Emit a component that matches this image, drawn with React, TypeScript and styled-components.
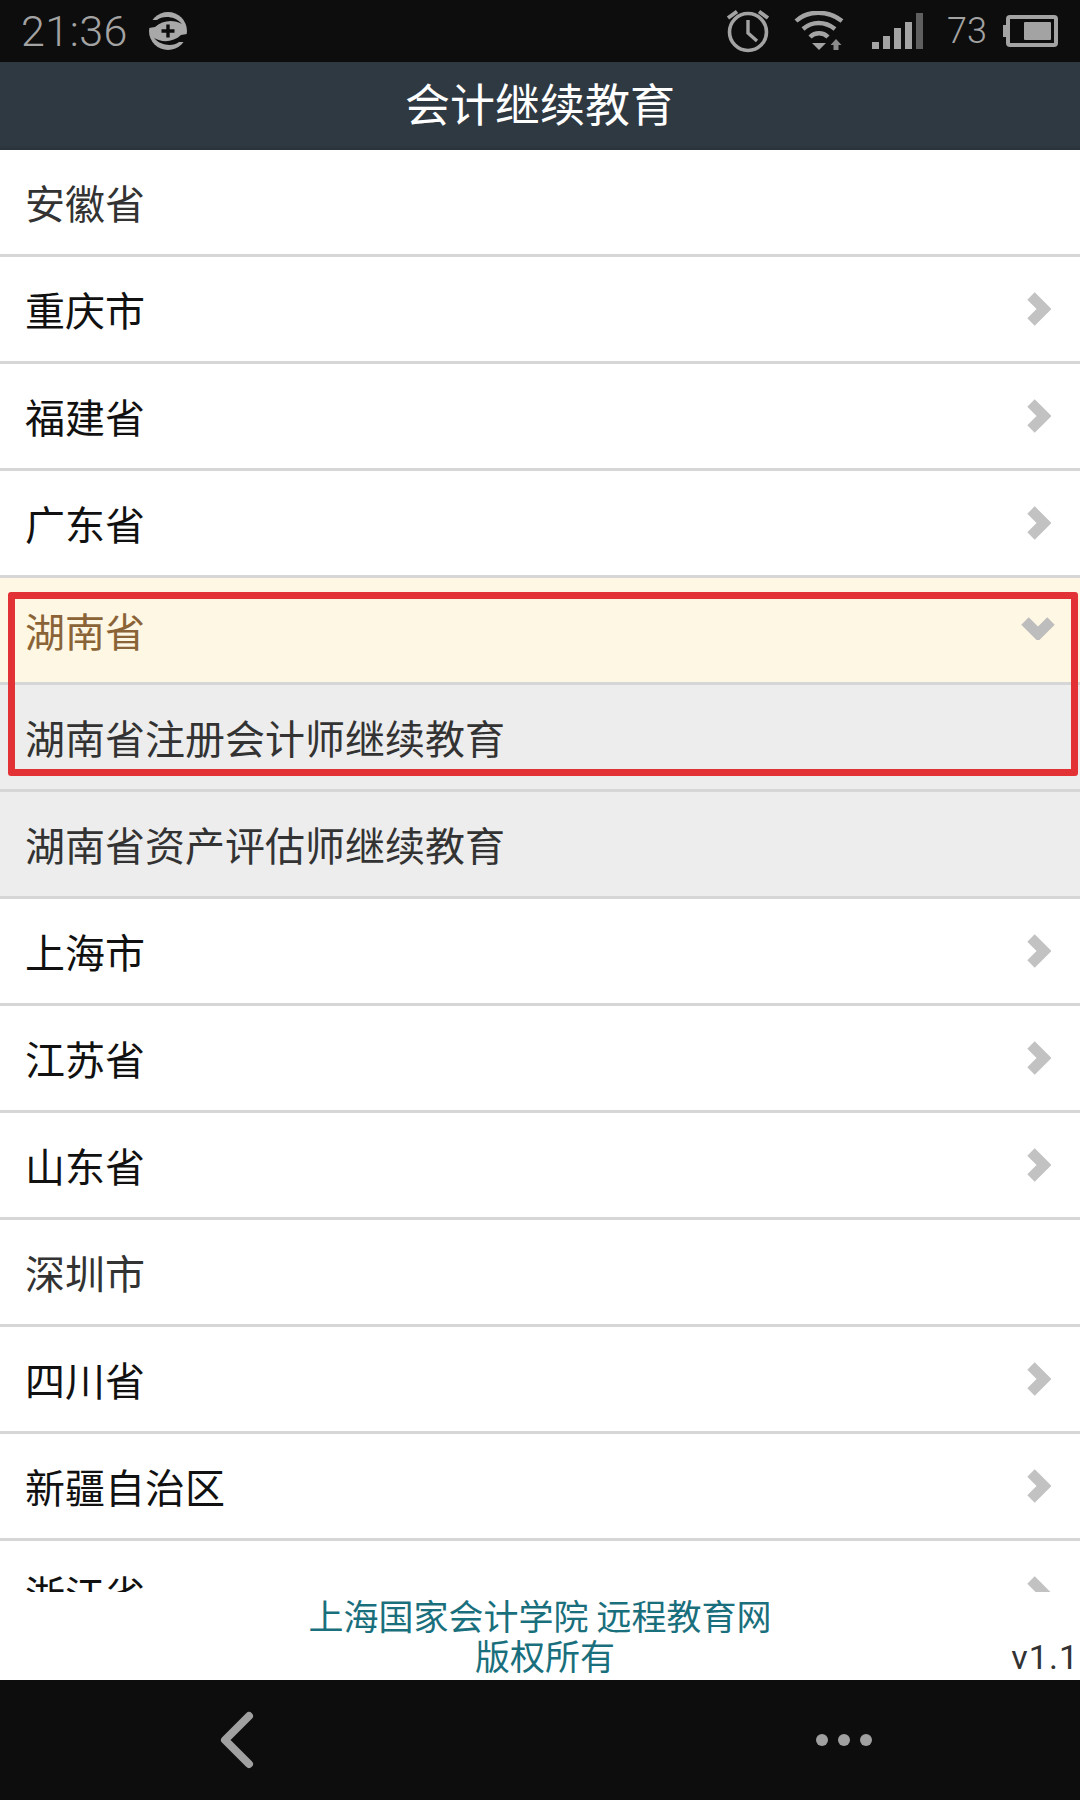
import React from "react";
import styled, { createGlobalStyle } from "styled-components";

const Global = createGlobalStyle`
  html, body { margin: 0; padding: 0; background: #fff; }
  * { box-sizing: border-box; }
`;

const CJK = `"Noto Sans CJK SC", "Noto Sans", sans-serif`;

const Screen = styled.div`
  position: relative;
  width: 1080px;
  height: 1800px;
  display: flex;
  flex-direction: column;
  overflow: hidden;
  background: #fff;
  font-family: ${CJK};
`;

const StatusBar = styled.div`
  height: 62px;
  flex: none;
  background: #0d0d0d;
  display: flex;
  align-items: center;
  justify-content: space-between;
  padding: 0 22px 0 21px;
  color: #a3a3a3;
  font-family: Roboto, sans-serif;
`;

const StatusGroup = styled.div`
  display: flex;
  align-items: center;
`;

const Clock = styled.span`
  font-size: 43px;
  font-weight: 300;
  line-height: 62px;
  letter-spacing: 0.5px;
  width: 128px;
`;

const Battery = styled.span`
  font-size: 36px;
  font-weight: 300;
  line-height: 62px;
  margin: 0 15px 0 23px;
`;

const Header = styled.header`
  height: 88px;
  flex: none;
  display: flex;
  align-items: center;
  justify-content: center;
  padding-bottom: 8px;
  color: #fff;
  font-size: 45px;
  background: linear-gradient(#2f3942 0, #2f3942 94%, #2a333b 100%);
`;

const List = styled.ul`
  flex: 1;
  min-height: 0;
  margin: 0;
  padding: 0;
  list-style: none;
  overflow: hidden;
`;

type RowKind = "plain" | "link" | "open" | "child";

const rowBg: Record<RowKind, string> = {
  plain: "#fff",
  link: "#fff",
  open: "#fef7e3",
  child: "#ededed",
};
const rowColor: Record<RowKind, string> = {
  plain: "#333",
  link: "#111",
  open: "#8a6337",
  child: "#333",
};

const Row = styled.li<{ $kind: RowKind }>`
  height: 107px;
  display: flex;
  align-items: center;
  justify-content: space-between;
  padding: 0 29px 0 25px;
  border-bottom: 3px solid #d6d6d6;
  font-size: 40px;
  line-height: 1;
  background: ${(p) => rowBg[p.$kind]};
  color: ${(p) => rowColor[p.$kind]};
`;

const Footer = styled.footer`
  position: relative;
  height: 88px;
  flex: none;
  padding-top: 3px;
  background: #fff;
  display: flex;
  flex-direction: column;
  align-items: center;
  color: #1a6f7c;
  font-size: 35px;
  line-height: 40px;
`;

const FooterLine = styled.span<{ $shift?: number }>`
  margin-left: ${(p) => p.$shift ?? 0}px;
`;

const Version = styled.span`
  position: absolute;
  right: 1px;
  bottom: 3px;
  font-family: Roboto, sans-serif;
  font-size: 34px;
  line-height: 40px;
  letter-spacing: 1px;
  color: #333;
`;

const NavBar = styled.nav`
  height: 120px;
  flex: none;
  background: #0d0d0d;
  display: flex;
  align-items: center;
  justify-content: space-between;
  padding: 0 208px 0 218px;
`;

const Dots = styled.div`
  display: flex;
  gap: 10px;
`;

const Dot = styled.span`
  width: 12px;
  height: 12px;
  border-radius: 50%;
  background: #a0a0a0;
`;

const Annotation = styled.div`
  position: absolute;
  left: 8px;
  top: 592px;
  width: 1070px;
  height: 184px;
  border: 7px solid #e33236;
  border-radius: 3px;
  pointer-events: none;
`;

const ChevronRight = () => (
  <svg width="24" height="34" viewBox="0 0 24 34">
    <path d="M4 4 L17 17 L4 30" fill="none" stroke="#c2c2c2" strokeWidth="10.5" />
  </svg>
);

const ChevronDown = () => (
  <svg width="34" height="24" viewBox="0 0 34 24" style={{ marginRight: -4, marginTop: -4 }}>
    <path d="M4 5 L17 18 L30 5" fill="none" stroke="#bdbdbd" strokeWidth="10.5" />
  </svg>
);

const SyncIcon = () => (
  <svg width="40" height="40" viewBox="0 0 40 40" style={{ marginLeft: -1 }}>
    <circle cx="20" cy="20" r="19" fill="#a8a8a8" />
    <path d="M1 9 H9 C14 5 26 4 34 13 C26 8 14 9 7 16 L1 17 Z" fill="#0d0d0d" />
    <path d="M39 31 H31 C26 35 14 36 6 27 C14 32 26 31 33 24 L39 23 Z" fill="#0d0d0d" />
    <path d="M20 13.5 V26.5 M13.5 20 H26.5" stroke="#0d0d0d" strokeWidth="3.4" />
  </svg>
);

const AlarmIcon = () => (
  <svg width="44" height="44" viewBox="0 0 44 44" style={{ marginRight: 24 }}>
    <circle cx="22" cy="23" r="18.5" fill="none" stroke="#a3a3a3" strokeWidth="3.6" />
    <path d="M22 11 V24 L31 32" fill="none" stroke="#a3a3a3" strokeWidth="3.4" />
    <path d="M2 9 L11 2.5 M33 2.5 L42 9" stroke="#a3a3a3" strokeWidth="4" />
  </svg>
);

const WifiIcon = () => (
  <svg width="50" height="40" viewBox="0 0 50 40" style={{ marginRight: 28 }}>
    <path d="M2 10 C14 -1 34 -1 48 10" fill="none" stroke="#a3a3a3" strokeWidth="4.4" />
    <path d="M9 18 C18 10 31 10 41 18" fill="none" stroke="#a3a3a3" strokeWidth="4.4" />
    <path d="M16 26 C21 21 29 21 34 26" fill="none" stroke="#a3a3a3" strokeWidth="4.4" />
    <path d="M18 32 H32 L25 39 Z" fill="#a3a3a3" />
    <path d="M42 28 L47.5 34 H44.5 V39 H39.5 V34 H36.5 Z" fill="#8a8a8a" />
  </svg>
);

const SignalIcon = () => (
  <svg width="52" height="36" viewBox="0 0 52 36">
    <rect x="0" y="29" width="7" height="7" fill="#a3a3a3" />
    <rect x="11" y="23" width="7" height="13" fill="#a3a3a3" />
    <rect x="22" y="15" width="7" height="21" fill="#a3a3a3" />
    <rect x="33" y="9" width="7" height="27" fill="#a3a3a3" />
    <rect x="44" y="0" width="7" height="36" fill="#5f5f5f" />
  </svg>
);

const BatteryIcon = () => (
  <svg width="56" height="32" viewBox="0 0 56 32">
    <rect x="6" y="2" width="48" height="28" rx="2" fill="none" stroke="#a3a3a3" strokeWidth="4" />
    <path d="M4 10 H1 V22 H4 Z" fill="#a3a3a3" />
    <rect x="22" y="7" width="27" height="18" rx="1" fill="#a3a3a3" />
  </svg>
);

const BackIcon = () => (
  <svg width="38" height="60" viewBox="0 0 38 60">
    <path d="M31 6 L7 30 L31 54" fill="none" stroke="#a0a0a0" strokeWidth="8" strokeLinecap="round" strokeLinejoin="round" />
  </svg>
);

const rows: { label: string; kind: RowKind }[] = [
  { label: "安徽省", kind: "plain" },
  { label: "重庆市", kind: "link" },
  { label: "福建省", kind: "link" },
  { label: "广东省", kind: "link" },
  { label: "湖南省", kind: "open" },
  { label: "湖南省注册会计师继续教育", kind: "child" },
  { label: "湖南省资产评估师继续教育", kind: "child" },
  { label: "上海市", kind: "link" },
  { label: "江苏省", kind: "link" },
  { label: "山东省", kind: "link" },
  { label: "深圳市", kind: "plain" },
  { label: "四川省", kind: "link" },
  { label: "新疆自治区", kind: "link" },
  { label: "浙江省", kind: "link" },
];

export default function App() {
  return (
    <Screen>
      <Global />
      <StatusBar>
        <StatusGroup>
          <Clock>21:36</Clock>
          <SyncIcon />
        </StatusGroup>
        <StatusGroup>
          <AlarmIcon />
          <WifiIcon />
          <SignalIcon />
          <Battery>73</Battery>
          <BatteryIcon />
        </StatusGroup>
      </StatusBar>
      <Header>会计继续教育</Header>
      <List>
        {rows.map((r) => (
          <Row key={r.label} $kind={r.kind}>
            <span>{r.label}</span>
            {r.kind === "link" && <ChevronRight />}
            {r.kind === "open" && <ChevronDown />}
          </Row>
        ))}
      </List>
      <Footer>
        <FooterLine>上海国家会计学院 远程教育网</FooterLine>
        <FooterLine $shift={10}>版权所有</FooterLine>
        <Version>v1.1</Version>
      </Footer>
      <NavBar>
        <BackIcon />
        <Dots>
          <Dot />
          <Dot />
          <Dot />
        </Dots>
      </NavBar>
      <Annotation />
    </Screen>
  );
}
